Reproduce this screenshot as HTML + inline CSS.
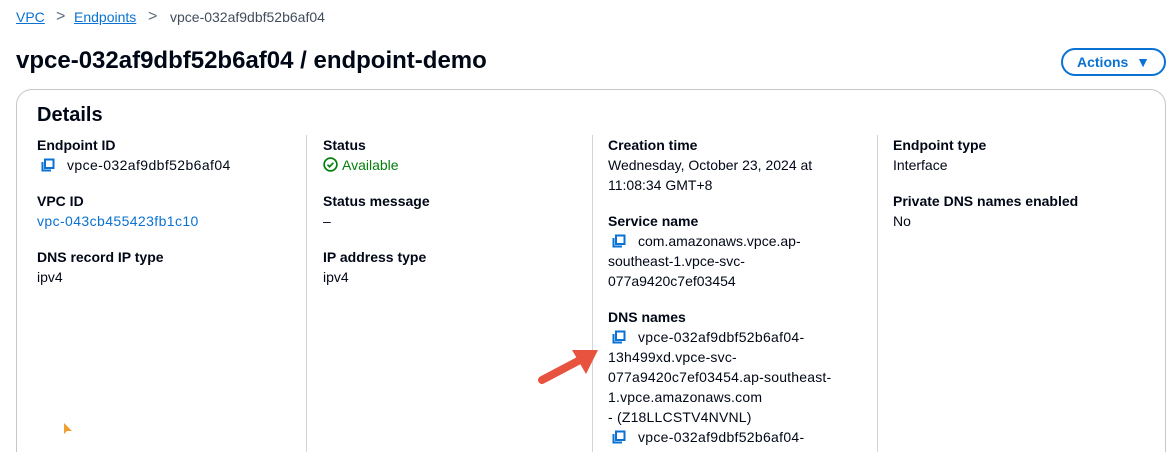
<!DOCTYPE html>
<html style="height:452px;overflow:hidden"><head><style>
body{margin:0;width:1172px;height:452px;overflow:hidden;background:#fff;font-family:"Liberation Sans",sans-serif;color:#000716;position:relative}
.a{position:absolute;white-space:nowrap}
.bc{top:9px;font-size:14px}
.lnk{color:#0972d3;text-decoration:underline}
.card{position:absolute;left:16px;top:89px;width:1148px;height:380px;border:1px solid #c6c6cd;border-radius:16px}
.lab{font-weight:bold;font-size:14px}
.val{font-size:14px;line-height:20px}
.div{position:absolute;top:135px;width:1px;height:320px;background:#d1d5db}
.cp{display:inline-block;width:14px;height:14px;vertical-align:-2px;margin-right:12px}
</style></head><body>
<div class="a bc" style="left:16px"><span class="lnk">VPC</span></div>
<div class="a bc" style="left:56px;color:#5f6b7a;font-size:16px;top:8px">&gt;</div>
<div class="a bc" style="left:74px"><span class="lnk">Endpoints</span></div>
<div class="a bc" style="left:148px;color:#5f6b7a;font-size:16px;top:8px">&gt;</div>
<div class="a bc" style="left:170px;color:#414d5c">vpce-032af9dbf52b6af04</div>
<div class="a" style="left:16px;top:47px;font-size:24px;font-weight:bold">vpce-032af9dbf52b6af04 / endpoint-demo</div>
<div class="a" style="left:1061px;top:48px;width:101px;height:24px;border:2px solid #0972d3;border-radius:20px;color:#0972d3;font-weight:bold;font-size:14px;line-height:24px;text-align:center;box-sizing:content-box">Actions &nbsp;▼</div>
<div class="card"></div>
<div class="a" style="left:37px;top:104px;font-size:20px;font-weight:bold">Details</div>
<div class="div" style="left:306px"></div><div class="div" style="left:592px"></div><div class="div" style="left:877px"></div>
<svg width="0" height="0" style="position:absolute"><defs><symbol id="c" viewBox="0 0 14 14"><path d="M4 1.5h8.5v8.5H4z M1.5 4v8.5H10" fill="none" stroke="#0972d3" stroke-width="2"/></symbol></defs></svg>
<div class="a val" style="left:37px;top:135px"><div class="lab">Endpoint ID</div><div style="padding-left:4px;letter-spacing:0.4px"><svg class="cp"><use href="#c"/></svg>vpce-032af9dbf52b6af04</div>
<div class="lab" style="margin-top:16px">VPC ID</div><div style="color:#0972d3;letter-spacing:0.4px">vpc-043cb455423fb1c10</div>
<div class="lab" style="margin-top:16px">DNS record IP type</div><div>ipv4</div></div>
<div class="a val" style="left:323px;top:135px"><div class="lab">Status</div><div style="color:#037f0c"><svg width="15" height="15" viewBox="0 0 16 16" style="vertical-align:-2px;margin-right:4px"><circle cx="8" cy="8" r="6.8" fill="none" stroke="#037f0c" stroke-width="1.8"/><path d="M4.8 8.2l2.2 2.2 4-4.2" fill="none" stroke="#037f0c" stroke-width="1.8"/></svg>Available</div>
<div class="lab" style="margin-top:16px">Status message</div><div>–</div>
<div class="lab" style="margin-top:16px">IP address type</div><div>ipv4</div></div>
<div class="a val" style="left:608px;top:135px"><div class="lab">Creation time</div><div>Wednesday, October 23, 2024 at<br>11:08:34 GMT+8</div>
<div class="lab" style="margin-top:16px">Service name</div><div style="padding-left:4px"><svg class="cp"><use href="#c"/></svg>com.amazonaws.vpce.ap-</div><div>southeast-1.vpce-svc-<br>077a9420c7ef03454</div>
<div class="lab" style="margin-top:16px">DNS names</div><div style="padding-left:4px;letter-spacing:0.3px"><svg class="cp"><use href="#c"/></svg>vpce-032af9dbf52b6af04-</div><div style="letter-spacing:0.2px">13h499xd.vpce-svc-<br>077a9420c7ef03454.ap-southeast-<br>1.vpce.amazonaws.com<br>- (Z18LLCSTV4NVNL)</div>
<div style="padding-left:4px;letter-spacing:0.3px"><svg class="cp"><use href="#c"/></svg>vpce-032af9dbf52b6af04-</div></div>
<div class="a val" style="left:893px;top:135px"><div class="lab">Endpoint type</div><div>Interface</div>
<div class="lab" style="margin-top:16px">Private DNS names enabled</div><div>No</div></div>
<svg class="a" style="left:530px;top:340px" width="80" height="50" viewBox="0 0 80 50"><path d="M12 40 L50 20" stroke="#e8533f" stroke-width="8" stroke-linecap="round"/><path d="M68 10 L42 10 L56 34 Z" fill="#e8533f"/></svg>
<svg class="a" style="left:63px;top:422px" width="10" height="14"><path d="M1 1 L1 12 L4 9 L9 9 Z" fill="#f0a030"/></svg>
</body></html>
